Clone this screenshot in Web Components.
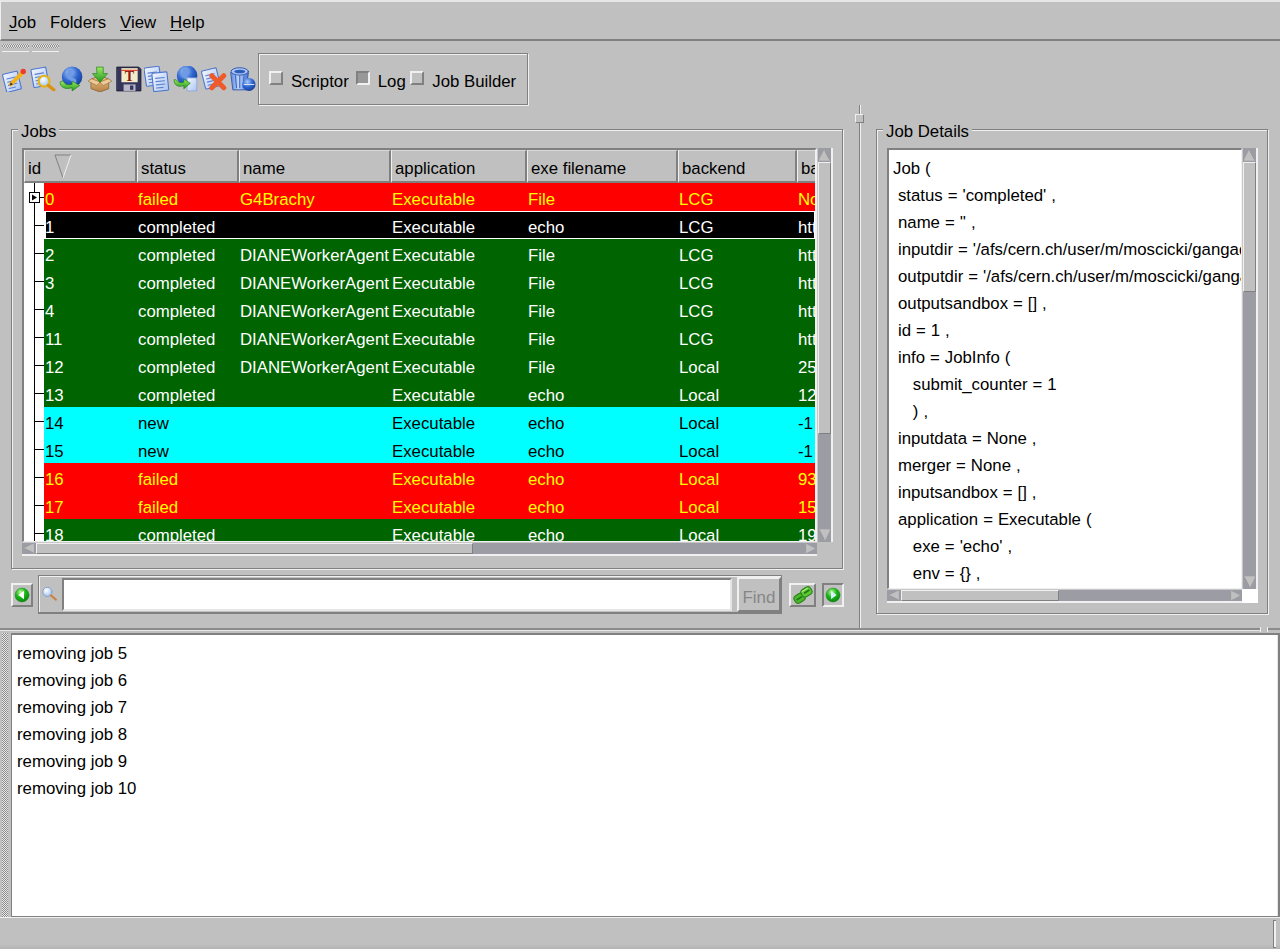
<!DOCTYPE html>
<html>
<head>
<meta charset="utf-8">
<title>Job Monitor</title>
<style>
html, body { margin: 0; height: 949px; overflow: hidden; background: #c0c0c0; color: #000; font: 16.8px "Liberation Sans", Arial, sans-serif; }
body { display: flex; flex-direction: column; }
</style>
</head>
<body>
<gq-menubar></gq-menubar>
<gq-handles></gq-handles>
<gq-toolbar></gq-toolbar>
<gq-main></gq-main>
<gq-sep></gq-sep>
<gq-log></gq-log>
<gq-status></gq-status>

<script>
const DEFS = `<defs>
<linearGradient id="doc" x1="0" y1="0" x2="1" y2="1"><stop offset="0" stop-color="#f4f8ff"/><stop offset="1" stop-color="#a9c4f2"/></linearGradient>
<radialGradient id="globe" cx=".38" cy=".3" r=".8"><stop offset="0" stop-color="#a9ccf8"/><stop offset=".5" stop-color="#2f66d0"/><stop offset="1" stop-color="#12348c"/></radialGradient>
<linearGradient id="grn" x1="0" y1="0" x2="0" y2="1"><stop offset="0" stop-color="#9fe860"/><stop offset="1" stop-color="#1f9a1f"/></linearGradient>
<linearGradient id="box" x1="0" y1="0" x2="0" y2="1"><stop offset="0" stop-color="#f0c98c"/><stop offset="1" stop-color="#b57f45"/></linearGradient>
<linearGradient id="bin" x1="0" y1="0" x2="1" y2="0"><stop offset="0" stop-color="#5f8ae0"/><stop offset=".45" stop-color="#c4d8f8"/><stop offset="1" stop-color="#3f6cd0"/></linearGradient>
<radialGradient id="ball" cx=".4" cy=".3" r=".8"><stop offset="0" stop-color="#c8f5a0"/><stop offset=".45" stop-color="#16b816"/><stop offset="1" stop-color="#0a7a0a"/></radialGradient>
<radialGradient id="lens" cx=".4" cy=".35" r=".7"><stop offset="0" stop-color="#fff"/><stop offset="1" stop-color="#9cc0f0"/></radialGradient>
</defs>`;

const sheet = (x, y, r) => `<g transform="rotate(${r} ${x + 7} ${y + 8})"><rect x="${x}" y="${y}" width="14" height="17" rx="1" fill="url(#doc)" stroke="#4f75cc"/><path d="M${x + 3} ${y + 5}h8M${x + 3} ${y + 8}h8M${x + 3} ${y + 11}h8M${x + 3} ${y + 14}h6" stroke="#5d80d0"/></g>`;
const earth = `<circle cx="13" cy="10" r="9.5" fill="url(#globe)"/><path d="M9 3c3 1 5 0 6 2s-3 3-2 5 4 1 4 4-3 3-4 1-4-2-5-5 2-4 1-7z" fill="#6f9ae4"/>`;
const curl = `<path d="M2 15c0 5 5 7 11 5v3l7-5-7-4v3c-4 1-7 0-8-3z" fill="url(#grn)" stroke="#1a7d1a" stroke-width=".6"/>`;

const ICONS = {
	edit: sheet(3, 6, -14) + `<path d="M9 17l11-11" stroke="#f3b21a" stroke-width="3.6"/><path d="M8 18l3-1-2-2z" fill="#333"/><circle cx="20.5" cy="5" r="2.5" fill="#ef3a2e"/>`,
	find: sheet(2, 2, -10) + `<circle cx="13" cy="14" r="5" fill="url(#lens)" stroke="#e4b416" stroke-width="2"/><path d="M17 18l5 4" stroke="#d99116" stroke-width="3"/>`,
	web: earth + curl,
	box: `<path d="M4 12l8-3 8 3v9l-8 3-8-3z" fill="url(#box)" stroke="#8a5f2d" stroke-width=".7"/><path d="M4 12l-3 2 8 4 3-3zM20 12l3 2-8 4-3-3z" fill="#eccb98" stroke="#8a5f2d" stroke-width=".5"/><path d="M9 1h6v6h4l-7 8-7-8h4z" fill="url(#grn)" stroke="#1a7d1a" stroke-width=".6"/>`,
	save: `<path d="M1 1h20l2 2v20H1z" fill="#34345c" stroke="#18182e" stroke-width=".8"/><rect x="5" y="2" width="15" height="13" fill="#f4ecc8"/><path d="M5 4h15" stroke="#d84a3a"/><text x="12.5" y="14" font-family="Liberation Serif, serif" font-size="13" font-weight="700" text-anchor="middle" fill="#8c1a12">T</text><rect x="7" y="17" width="11" height="6" fill="#b8b8c8"/><rect x="13" y="18" width="3" height="4" fill="#34345c"/>`,
	copy: sheet(1, 1, -8) + sheet(8, 6, -6),
	send: `<g transform="translate(0 -1)">` + earth + `</g><rect x="13" y="11" width="9" height="12" fill="url(#doc)" stroke="#8aa4d8" stroke-width=".7"/><path d="M1 13c0 5 4 7 9 5v3l6-5-6-4v3c-3 1-6 0-7-2z" fill="url(#grn)" stroke="#1a7d1a" stroke-width=".6"/>`,
	kill: sheet(2, 3, -14) + `<path d="M10 9l11 11M21 9L10 20" stroke="#ee5a2a" stroke-width="4.6"/>`,
	trash: `<path d="M1 6h16l-2 16H3z" fill="url(#bin)" stroke="#234ea8" stroke-width=".8"/><path d="M5 9l1 11M9 9v11M13 9l-1 11" stroke="#3a66c8"/><ellipse cx="9" cy="5" rx="8" ry="3.4" fill="#a8c4f4" stroke="#234ea8" stroke-width=".8"/><ellipse cx="9" cy="5" rx="5" ry="1.6" fill="#2d59b8"/><circle cx="17.5" cy="17" r="6" fill="url(#globe)"/><path d="M13 17h9" stroke="#d6e4fa"/>`,
	back: `<circle cx="12" cy="12" r="10.5" fill="url(#ball)" stroke="#0a7a0a" stroke-width=".6"/><path d="M15 5.5v13L6.5 12z" fill="#fff"/>`,
	next: `<circle cx="12" cy="12" r="10.5" fill="url(#ball)" stroke="#0a7a0a" stroke-width=".6"/><path d="M9 5.5v13l8.5-6.5z" fill="#d8f0ff"/>`,
	link: `<g transform="rotate(-32 12 12)"><rect x="0" y="8" width="13" height="10" rx="4" fill="#4cb82c" stroke="#2b8418" stroke-width="1.4"/><rect x="11" y="6" width="13" height="10" rx="4" fill="#5cc834" stroke="#2b8418" stroke-width="1.4"/><path d="M3 13h6" stroke="#1f7a12" stroke-width="2"/><path d="M15 11h6" stroke="#1f7a12" stroke-width="2"/><path d="M13 8h8" stroke="#c8f5a0"/></g>`,
	glass: `<circle cx="9" cy="9" r="6.5" fill="url(#lens)" stroke="#8aa0c0" stroke-width="1.4"/><path d="M14 14l7 6" stroke="#c88440" stroke-width="3"/>`
};

class GqIcon extends HTMLElement {
	connectedCallback() {
		const size = this.getAttribute('size') || 24;
		this.attachShadow({ mode: 'open' }).innerHTML = `
			<style>:host { display: block; width: ${size}px; height: ${size}px; } svg { display: block; width: 100%; height: 100%; }</style>
			<svg viewBox="0 0 24 24" stroke-linecap="round">${DEFS}${ICONS[this.getAttribute('name')]}</svg>`;
	}
}

class GqMenubar extends HTMLElement {
	connectedCallback() {
		this.attachShadow({ mode: 'open' }).innerHTML = `
			<style>
				:host { display: flex; flex: none; height: 41px; box-sizing: border-box; padding: 4px 0 0 8px; gap: 12px; align-items: center;
					border-top: 2px solid #e6e6e6; border-left: 1px solid #eee; border-bottom: 2px solid #808080; }
				span { padding: 0 1px; }
				span:nth-child(2) { margin-left: -1px; }
				u { text-underline-offset: 2px; }
			</style>
			<span><u>J</u>ob</span><span>Folders</span><span><u>V</u>iew</span><span><u>H</u>elp</span>`;
	}
}

class GqHandles extends HTMLElement {
	connectedCallback() {
		this.attachShadow({ mode: 'open' }).innerHTML = `
			<style>
				:host { display: flex; flex: none; height: 12px; padding-left: 2px; gap: 3px; box-sizing: border-box; }
				i { width: 27px; height: 8px; margin-top: 2px; border-bottom: 1px solid #f0f0f0;
					background: conic-gradient(#909090 25%, #e0e0e0 0 50%, #909090 0 75%, #e0e0e0 0) 0 1px / 2px 2px repeat-x,
						conic-gradient(#e0e0e0 25%, #909090 0 50%, #e0e0e0 0 75%, #909090 0) 0 3px / 2px 2px repeat-x; }
			</style>
			<i></i><i></i>`;
	}
}

class GqCheck extends HTMLElement {
	connectedCallback() {
		const on = this.hasAttribute('checked');
		this.attachShadow({ mode: 'open' }).innerHTML = `
			<style>
				:host { display: flex; align-items: center; }
				b { width: 10px; height: 10px; margin: -3px 8px 0 0; border: 2px solid; border-color: ${on ? '#808080 #f0f0f0 #f0f0f0 #808080' : '#f0f0f0 #808080 #808080 #f0f0f0'}; background: ${on ? '#989898' : '#c0c0c0'}; }
				span { padding-top: 5px; }
			</style>
			<b></b><span><slot></slot></span>`;
	}
}

class GqToolbar extends HTMLElement {
	connectedCallback() {
		const icons = ['edit', 'find', 'web', 'box', 'save', 'copy', 'send', 'kill', 'trash'];
		this.attachShadow({ mode: 'open' }).innerHTML = `
			<style>
				:host { display: flex; flex: none; height: 52px; align-items: center; padding-left: 1px; box-sizing: border-box; }
				.icons { display: flex; gap: 2.65px; }
				.box { display: flex; align-items: center; box-sizing: border-box; width: 270px; height: 52px; margin-left: 1.8px; padding: 0 0 0 10px;
					border: 1px solid #808080; box-shadow: 1px 1px 0 #f0f0f0, inset 1px 1px 0 #f0f0f0; }
				.log { margin: 0 4.5px 0 7px; }
			</style>
			<div class="icons">${icons.map(n => `<gq-icon name="${n}" size="26"></gq-icon>`).join('')}</div>
			<div class="box"><gq-check>Scriptor</gq-check><gq-check class="log" checked>Log</gq-check><gq-check>Job Builder</gq-check></div>`;
	}
}

class GqGroup extends HTMLElement {
	connectedCallback() {
		this.attachShadow({ mode: 'open' }).innerHTML = `
			<style>
				:host { display: block; position: relative; box-sizing: border-box; border: 1px solid #808080;
					box-shadow: 1px 1px 0 #f0f0f0, inset 1px 1px 0 #f0f0f0; }
				.title { position: absolute; left: 6px; top: -7px; padding: 0 3px; line-height: 18px; background: #c0c0c0; }
			</style>
			<div class="title">${this.getAttribute('label')}</div><slot></slot>`;
	}
}

class GqScrollbar extends HTMLElement {
	connectedCallback() {
		const vert = this.getAttribute('orient') === 'v';
		const thumb = this.getAttribute('thumb');
		const arrow = (pts) => `<svg viewBox="0 0 14 14"><polygon points="${pts}" fill="#c0c0c0"/><polyline points="${pts}" fill="none" stroke="#f0f0f0" stroke-width="1"/><polygon points="${pts}" fill="none" stroke="#808080" stroke-width=".5"/></svg>`;
		const first = vert ? arrow('7,2 1.5,12.5 12.5,12.5') : arrow('1.5,7 12.5,1.5 12.5,12.5');
		const last = vert ? arrow('1.5,1.5 12.5,1.5 7,12.5') : arrow('1.5,1.5 12.5,7 1.5,12.5');
		this.attachShadow({ mode: 'open' }).innerHTML = `
			<style>
				:host { display: flex; flex-direction: ${vert ? 'column' : 'row'}; background: #9c9ca4; box-sizing: border-box;
					${vert ? 'width: 16px; border-left: 1px solid #c8c8c8; border-right: 2px solid #f0f0f0;' : 'height: 14px; border-bottom: 2px solid #f0f0f0; border-top: 1px solid #c8c8c8;'} }
				.btn { flex: none; ${vert ? 'height: 14px;' : 'width: 14px;'} background: #9c9ca4; display: flex; }
				svg { width: 100%; height: 100%; display: block; }
				.thumb { flex: none; box-sizing: border-box; ${vert ? `height: ${thumb}px;` : `width: ${thumb}px;`} background: #c0c0c0;
					border: 1px solid; border-color: #f0f0f0 #808080 #808080 #f0f0f0; }
				.track { flex: 1; }
			</style>
			<div class="btn">${first}</div><div class="thumb"></div><div class="track"></div><div class="btn">${last}</div>`;
	}
}

const COLS = [93, 102, 152, 136, 151, 119, 60];
const HEAD = [['id', 113], ['status', 102], ['name', 152], ['application', 136], ['exe filename', 151], ['backend', 119], ['ba', 60]];
const RED = 'failed', GRN = 'completed', CYAN = 'new';
const EXE = 'Executable';
const D = 'DIANEWorkerAgent';
const JOBS = [
	[0, RED, 'G4Brachy', 'File', 'LCG', 'None'],
	[1, GRN, '', 'echo', 'LCG', 'https', 'sel'],
	[2, GRN, D, 'File', 'LCG', 'https'],
	[3, GRN, D, 'File', 'LCG', 'https'],
	[4, GRN, D, 'File', 'LCG', 'https'],
	[11, GRN, D, 'File', 'LCG', 'https'],
	[12, GRN, D, 'File', 'Local', '2512'],
	[13, GRN, '', 'echo', 'Local', '1234'],
	[14, CYAN, '', 'echo', 'Local', '-1'],
	[15, CYAN, '', 'echo', 'Local', '-1'],
	[16, RED, '', 'echo', 'Local', '9321'],
	[17, RED, '', 'echo', 'Local', '1512'],
	[18, GRN, '', 'echo', 'Local', '1923']
];

class GqJobTable extends HTMLElement {
	connectedCallback() {
		const col = COLS.map(w => w + 'px').join(' ');
		const head = HEAD.map(([t, w]) => `<div class="th" style="width:${w}px">${t}${t === 'id' ? '<svg width="18" height="25" viewBox="0 0 18 25"><path d="M1 1l8 23" stroke="#808080" fill="none"/><path d="M1 1h16" stroke="#808080"/><path d="M17 1l-8 23" stroke="#f0f0f0"/></svg>' : ''}</div>`).join('');
		const rows = JOBS.map(([id, st, name, exe, back, extra, sel], i) => {
			const cells = [id, st, name, EXE, exe, back, extra].map(v => `<span>${v}</span>`).join('');
			const box = i === 0 ? '<svg class="exp" width="11" height="11" viewBox="0 0 11 11"><rect x=".5" y=".5" width="10" height="10" fill="#fff" stroke="#000"/><path d="M3 2.5l5 3-5 3z"/></svg>' : '';
			return `<div class="tr ${st}${sel ? ' sel' : ''}"><div class="tree">${box}</div><div class="cells">${cells}</div></div>`;
		}).join('');
		this.attachShadow({ mode: 'open' }).innerHTML = `
			<style>
				:host { display: grid; grid-template-columns: 795px 16px; grid-template-rows: 394px 14px; }
				.view { overflow: hidden; background: #fff; border: solid; border-width: 2px 2px 1px 2px; border-color: #808080 #f0f0f0 #f0f0f0 #808080; box-sizing: border-box; }
				.head { display: flex; height: 33px; background: #c0c0c0; white-space: nowrap; }
				.th { flex: none; box-sizing: border-box; height: 33px; padding: 0 0 0 3px; line-height: 36px; position: relative; overflow: hidden;
					border: 1px solid; border-color: #d8d8d8 #808080 #808080 #f0f0f0; border-right-width: 2px; border-bottom-width: 2px; }
				.th svg { position: absolute; left: 29px; top: 3px; }
				.tr { display: flex; height: 28px; }
				.tree { flex: none; width: 20px; position: relative; background: #fff; }
				.tree::before { content: ""; position: absolute; left: 10px; top: 0; bottom: 0; width: 1px; background: #000; }
				.tree::after { content: ""; position: absolute; left: 10px; right: 0; top: 14px; height: 1px; background: #000; }
				.exp { position: absolute; left: 5px; top: 9px; z-index: 1; }
				.cells { flex: none; display: grid; grid-template-columns: ${col}; height: 28px; white-space: nowrap; width: 771px; overflow: hidden; }
				.cells span { overflow: hidden; padding-left: 1px; height: 28px; line-height: 34px; }
				.failed .cells { background: #f00; color: #ff0; }
				.completed .cells { background: #006400; color: #fff; }
				.new .cells { background: #0ff; color: #000; }
				.sel .cells { background: #000; color: #fff; box-shadow: inset 2px 1px 0 #fff, inset -1px -1px 0 #fff; }
			</style>
			<div class="view"><div class="head">${head}</div>${rows}</div>
			<gq-scrollbar orient="v" thumb="272"></gq-scrollbar>
			<gq-scrollbar orient="h" thumb="437"></gq-scrollbar>`;
	}
}

class GqSearchRow extends HTMLElement {
	connectedCallback() {
		this.attachShadow({ mode: 'open' }).innerHTML = `
			<style>
				:host { display: flex; align-items: center; height: 39px; margin-top: 6px; }
				.btn { flex: none; box-sizing: border-box; width: 22px; height: 24px; display: flex; align-items: center; justify-content: center; border: 2px solid; border-color: #f0f0f0 #808080 #808080 #f0f0f0; }
				.btn.wide { width: 27px; margin-left: 7px; }
				.btn.on { margin-left: 6px; border-color: #808080 #f0f0f0 #f0f0f0 #808080; }
				.frame { flex: none; box-sizing: border-box; width: 744px; height: 39px; margin-left: 5px; display: flex; align-items: center; padding-left: 2px;
					border: 1px solid #808080; border-bottom-width: 2px; box-shadow: inset 1px 1px 0 #f0f0f0; }
				.input { flex: none; box-sizing: border-box; width: 670px; height: 33px; margin-left: 4px; background: #fff; border: 2px solid; border-color: #808080 #e6e6e6 #e6e6e6 #808080; }
				.find { flex: none; box-sizing: border-box; width: 44px; height: 35px; margin-left: 5px; text-align: center; line-height: 37px; color: #868686; font-size: 17px;
					border: 2px solid; border-color: #f0f0f0 #808080 #808080 #f0f0f0; }
			</style>
			<div class="btn"><gq-icon name="back" size="16"></gq-icon></div>
			<div class="frame"><gq-icon name="glass" size="18"></gq-icon><div class="input"></div><div class="find">Find</div></div>
			<div class="btn wide"><gq-icon name="link" size="20"></gq-icon></div>
			<div class="btn on"><gq-icon name="next" size="16"></gq-icon></div>`;
	}
}

const DETAILS = `Job (
 status = 'completed' ,
 name = '' ,
 inputdir = '/afs/cern.ch/user/m/moscicki/gangadir/workspace/Local/1/input/' ,
 outputdir = '/afs/cern.ch/user/m/moscicki/gangadir/workspace/Local/1/output/' ,
 outputsandbox = [] ,
 id = 1 ,
 info = JobInfo (
    submit_counter = 1
    ) ,
 inputdata = None ,
 merger = None ,
 inputsandbox = [] ,
 application = Executable (
    exe = 'echo' ,
    env = {} ,`;

class GqDetails extends HTMLElement {
	connectedCallback() {
		this.attachShadow({ mode: 'open' }).innerHTML = `
			<style>
				:host { display: grid; grid-template-columns: 355px 16px; grid-template-rows: 441px 14px; }
				.text { box-sizing: border-box; overflow: hidden; background: #fff; padding: 5px 0 0 4px; white-space: pre; line-height: 27px; word-spacing: .3px;
					border: solid; border-color: #808080 #f0f0f0 #f0f0f0 #808080; border-width: 2px 1px 1px 2px; }
				.corner { background: #fff; }
			</style>
			<div class="text">${DETAILS.replace(/</g, '&lt;')}</div>
			<gq-scrollbar orient="v" thumb="130"></gq-scrollbar>
			<gq-scrollbar orient="h" thumb="158"></gq-scrollbar>
			<div class="corner"></div>`;
	}
}

class GqMain extends HTMLElement {
	connectedCallback() {
		this.attachShadow({ mode: 'open' }).innerHTML = `
			<style>
				:host { display: grid; flex: none; height: 523px; grid-template-columns: 855px 9px 1fr; box-sizing: border-box; }
				.left { padding: 24px 0 0 11px; }
				.jobs { display: block; box-sizing: border-box; width: 832px; height: 440px; padding: 18px 0 0 10px; }
				.split { position: relative; }
				.split::before { content: ""; position: absolute; left: 4px; top: 0; bottom: 0; width: 1px; background: #808080; box-shadow: 1px 0 0 #f0f0f0; }
				.split::after { content: ""; position: absolute; left: 0; top: 9px; width: 7px; height: 7px; background: #c0c0c0; border: 1px solid; border-color: #f0f0f0 #808080 #808080 #f0f0f0; }
				.right { padding: 24px 0 0 12px; }
				.det { box-sizing: border-box; width: 392px; height: 485px; padding: 18px 0 0 10px; }
			</style>
			<div class="left">
				<gq-group class="jobs" label="Jobs"><gq-job-table></gq-job-table></gq-group>
				<gq-search-row></gq-search-row>
			</div>
			<div class="split"></div>
			<div class="right">
				<gq-group class="det" label="Job Details"><gq-details></gq-details></gq-group>
			</div>`;
	}
}

class GqSep extends HTMLElement {
	connectedCallback() {
		this.attachShadow({ mode: 'open' }).innerHTML = `
			<style>
				:host { display: flex; flex: none; height: 5px; box-sizing: border-box; border-top: 2px solid #8c8c8c; justify-content: flex-end; padding-right: 12px; }
				div { border-bottom: 1px solid #e6e6e6; flex: 1; height: 0; }
				i { width: 6px; height: 5px; margin-top: -3px; background: #c0c0c0; border: solid #f0f0f0; border-width: 0 1px; }
			</style>
			<div></div><i></i>`;
	}
}

class GqLog extends HTMLElement {
	connectedCallback() {
		const lines = [5, 6, 7, 8, 9, 10].map(n => `removing job ${n}`).join('\n');
		this.attachShadow({ mode: 'open' }).innerHTML = `
			<style>
				:host { display: flex; flex: none; height: 284px; box-sizing: border-box; }
				.grip { flex: none; width: 11px; box-sizing: border-box; padding: 0 3px 0 2px; }
				.grip i { display: block; height: 100%; background: conic-gradient(#8c8c8c 25%, #e8e8e8 0 50%, #8c8c8c 0 75%, #e8e8e8 0) 0 0 / 2px 2px; }
				.text { flex: 1; box-sizing: border-box; background: #fff; padding: 5px 0 0 5px; white-space: pre; line-height: 27px;
					border: solid; border-width: 2px 2px 1px 1px; border-color: #808080; box-shadow: inset -1px 0 0 #e6e6e6; }
			</style>
			<div class="grip"><i></i></div>
			<div class="text">${lines}</div>`;
	}
}

class GqStatus extends HTMLElement {
	connectedCallback() {
		this.attachShadow({ mode: 'open' }).innerHTML = `
			<style>
				:host { display: flex; flex: 1; justify-content: flex-end; box-sizing: border-box; padding: 2px 4px 1px 0; background: linear-gradient(#c0c0c0 0 26px, #b4b4b4); border-top: 1px solid #f0f0f0; }
				i { width: 2px; background: #f0f0f0; border: solid #808080; border-width: 1px 0 1px 1px; }
			</style>
			<i></i>`;
	}
}

customElements.define('gq-icon', GqIcon);
customElements.define('gq-menubar', GqMenubar);
customElements.define('gq-handles', GqHandles);
customElements.define('gq-check', GqCheck);
customElements.define('gq-toolbar', GqToolbar);
customElements.define('gq-group', GqGroup);
customElements.define('gq-scrollbar', GqScrollbar);
customElements.define('gq-job-table', GqJobTable);
customElements.define('gq-search-row', GqSearchRow);
customElements.define('gq-details', GqDetails);
customElements.define('gq-main', GqMain);
customElements.define('gq-sep', GqSep);
customElements.define('gq-log', GqLog);
customElements.define('gq-status', GqStatus);
</script>
</body>
</html>
